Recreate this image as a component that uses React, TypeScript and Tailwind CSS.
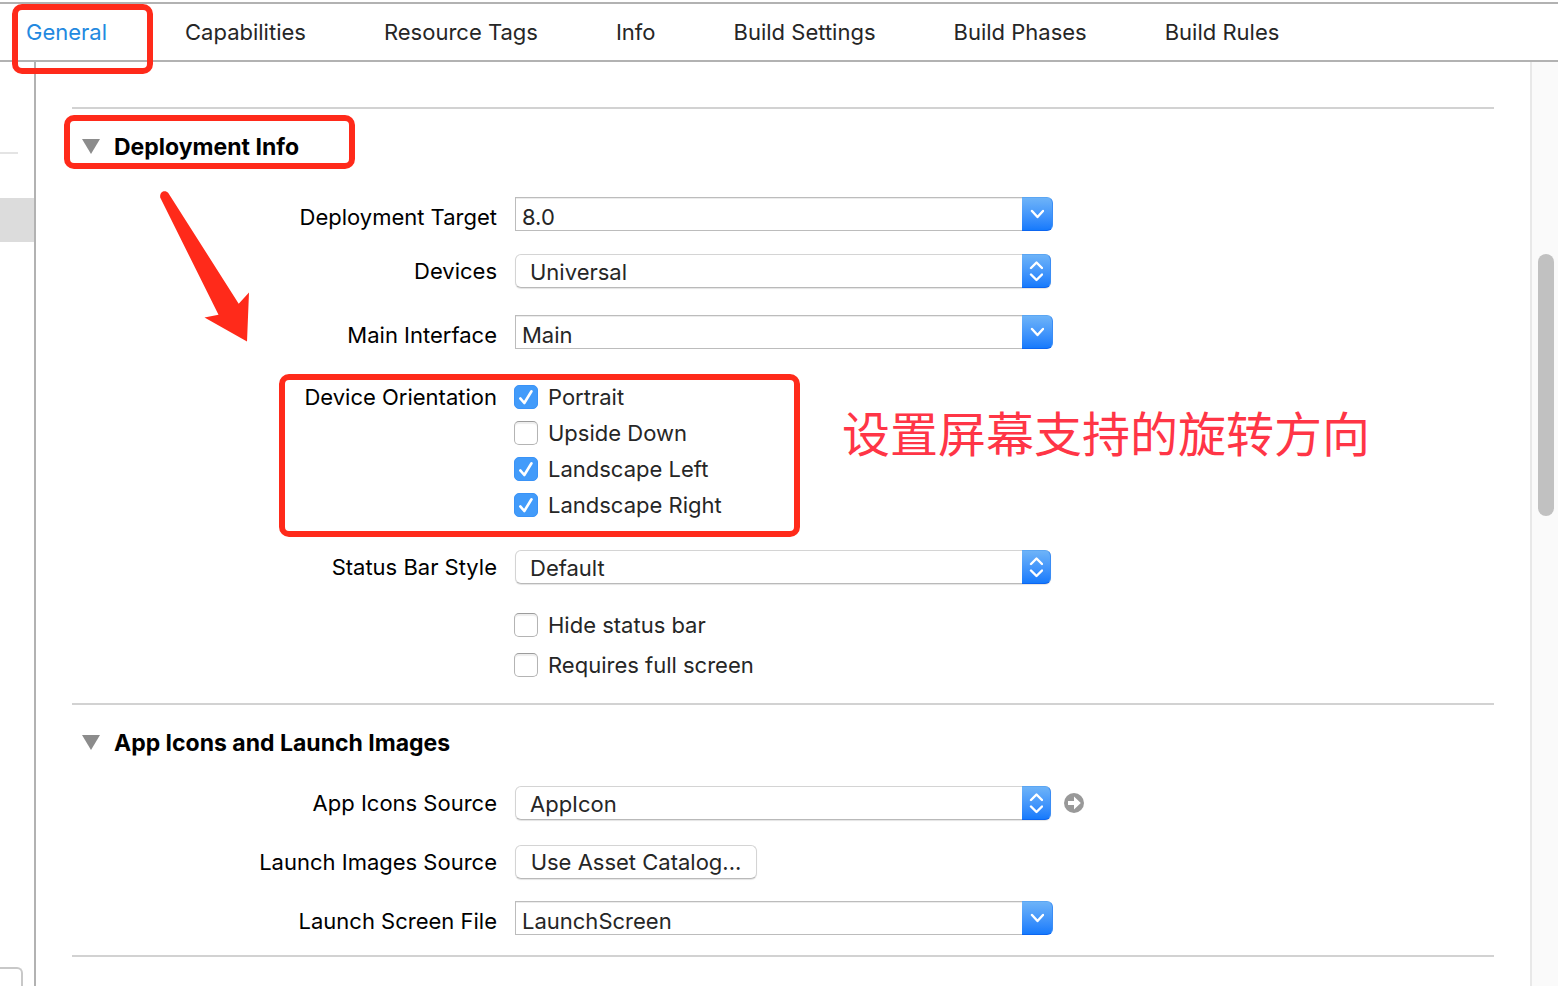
import React from 'react';

const tabs = [
  'General',
  'Capabilities',
  'Resource Tags',
  'Info',
  'Build Settings',
  'Build Phases',
  'Build Rules',
];

function Highlight({ className }: { className: string }) {
  return (
    <span
      aria-hidden="true"
      className={`absolute z-10 rounded-[10px] border-[6px] border-[#ff2a1a] pointer-events-none ${className}`}
    />
  );
}

function Divider({ className }: { className: string }) {
  return <hr className={`border-0 h-[2px] bg-[#d2d2d2] ${className}`} />;
}

function SectionHeading({ title, open, onToggle }: { title: string; open: boolean; onToggle: () => void }) {
  return (
    <h2>
      <button
        type="button"
        aria-expanded={open}
        onClick={onToggle}
        className="flex h-[34px] items-center gap-[14px] pl-[10px] text-[23px] font-bold text-black"
      >
        <svg width="18" height="16" viewBox="0 0 18 16" className={open ? '' : '-rotate-90'}>
          <path d="M0 0H18L9 15Z" fill="#8c8c8c" />
        </svg>
        {title}
      </button>
    </h2>
  );
}

function ComboRow({ id, label, value, className }: { id: string; label: string; value: string; className: string }) {
  return (
    <div className={`flex h-[34px] gap-[18px] ${className}`}>
      <label htmlFor={id} className="w-[425px] shrink-0 pt-[3px] text-right text-black">
        {label}
      </label>
      <div className="flex w-[538px]">
        <input
          id={id}
          type="text"
          defaultValue={value}
          className="min-w-0 flex-1 border border-r-0 border-[#bcbcbc] bg-white pt-[6px] pl-[6px] shadow-[inset_0_1px_0_#ececec] outline-none"
        />
        <button
          type="button"
          aria-label={`Show ${label} options`}
          className="flex w-[31px] items-center justify-center rounded-r-[6px] border border-l-0 border-t-[#5ba6f3] border-r-[#3b8df5] border-b-[#0d66f0] bg-linear-to-b from-[#6db3f8] to-[#157afc]"
        >
          <svg width="14" height="10" viewBox="0 0 14 10" fill="none" stroke="#fff" strokeWidth="2.4" strokeLinecap="round" strokeLinejoin="round">
            <path d="M2 2l5.5 6L13 2" />
          </svg>
        </button>
      </div>
    </div>
  );
}

interface PopupRowProps {
  id: string;
  label: string;
  options: string[];
  className: string;
  children?: React.ReactNode;
}

function PopupRow({ id, label, options, className, children }: PopupRowProps) {
  return (
    <div className={`flex h-[34px] items-center gap-[18px] ${className}`}>
      <label htmlFor={id} className="w-[425px] shrink-0 text-right text-black">
        {label}
      </label>
      <div className="relative h-full w-[536px]">
        <select
          id={id}
          className="h-full w-full appearance-none rounded-[6px] border border-[#d4d4d4] border-b-[#b9b9b9] bg-white pb-[2px] pl-[14px] pr-8 shadow-[0_1px_1px_#e4e4e4] outline-none"
        >
          {options.map((option) => (
            <option key={option}>{option}</option>
          ))}
        </select>
        <span className="absolute inset-y-0 right-0 flex w-[29px] items-center justify-center rounded-r-[6px] border border-l-0 border-t-[#5ba6f3] border-r-[#3b8df5] border-b-[#0d66f0] bg-linear-to-b from-[#6db3f8] to-[#157afc] pointer-events-none">
          <svg width="14" height="22" viewBox="0 0 14 22" fill="none" stroke="#fff" strokeWidth="2.4" strokeLinecap="round" strokeLinejoin="round">
            <path d="M2 8l5.5-5.5L13 8M2 14.5l5.5 5.5L13 14.5" />
          </svg>
        </span>
      </div>
      {children}
    </div>
  );
}

function Checkbox({ label, checked, className }: { label: string; checked?: boolean; className: string }) {
  return (
    <label className={`flex items-center gap-[10px] ${className}`}>
      <span className="relative h-6 w-6">
        <input
          type="checkbox"
          defaultChecked={checked}
          className="peer block h-6 w-6 appearance-none rounded-[5px] border border-[#b4b4b4] border-t-[#9c9c9c] bg-white shadow-[inset_0_2px_1px_#eeeeee] checked:border-[#3a93f7] checked:bg-[#429bfa] checked:shadow-none"
        />
        <svg
          viewBox="0 0 24 24"
          fill="none"
          stroke="#fff"
          strokeWidth="2.6"
          strokeLinecap="round"
          strokeLinejoin="round"
          className="absolute inset-0 hidden h-6 w-6 pointer-events-none peer-checked:block"
        >
          <path d="M6.3 13.4l4 4.6L17.5 6.3" />
        </svg>
      </span>
      {label}
    </label>
  );
}

export default function App() {
  const [activeTab, setActiveTab] = React.useState('General');
  const [deploymentOpen, setDeploymentOpen] = React.useState(true);
  const [iconsOpen, setIconsOpen] = React.useState(true);

  return (
    <div className="flex min-h-screen flex-col bg-white pt-[2px] font-['Inter','Noto_Sans_CJK_SC',sans-serif] text-[22px] leading-[34px] text-[#262626]">
      <nav className="relative flex h-[60px] items-center gap-[78px] border-y-2 border-[#b2b2b2] pl-[26px] whitespace-nowrap">
        {tabs.map((tab) => (
          <button
            key={tab}
            type="button"
            onClick={() => setActiveTab(tab)}
            className={activeTab === tab ? 'text-[#2389e0]' : 'text-[#262626]'}
          >
            {tab}
          </button>
        ))}
        <Highlight className="left-3 top-0 h-[70px] w-[141px]" />
      </nav>

      <div className="flex flex-1">
        <aside className="flex w-9 shrink-0 flex-col border-r-2 border-[#b2b2b2]">
          <div className="mt-[90px] h-[2px] w-[18px] bg-[#e4e4e4]" />
          <div className="mt-11 h-11 bg-[#dcdcdc]" />
          <div className="mt-auto h-[19px] w-[23px] rounded-tr-[6px] border-t-2 border-r-2 border-[#c8c8c8]" />
        </aside>

        <main className="min-w-0 flex-1 px-9">
          <Divider className="mt-[45px]" />

          <section className="relative pt-[21px]">
            <SectionHeading
              title="Deployment Info"
              open={deploymentOpen}
              onToggle={() => setDeploymentOpen(!deploymentOpen)}
            />
            <Highlight className="-left-2 top-[6px] h-[54px] w-[291px]" />
            <svg
              width="90"
              height="152"
              viewBox="160 190 90 152"
              className="absolute left-[88px] top-[81px] pointer-events-none"
            >
              <path
                d="M160.2 197.5C159.5 191 165.5 189.5 168.3 193L238.7 303.7L249 292.5L247 341.5L204.5 317.5L218.5 314.8Z"
                fill="#ff2a1a"
              />
            </svg>

            {deploymentOpen && (
              <div>
                <ComboRow id="target" label="Deployment Target" value="8.0" className="mt-[33px]" />
                <PopupRow id="devices" label="Devices" options={['Universal', 'iPhone', 'iPad']} className="mt-[23px]" />
                <ComboRow id="main-interface" label="Main Interface" value="Main" className="mt-[27px]" />

                <div role="group" aria-labelledby="orientation" className="relative mt-[30px] flex gap-[17px]">
                  <span id="orientation" className="w-[425px] shrink-0 text-right leading-9 text-black">
                    Device Orientation
                  </span>
                  <div>
                    <Checkbox label="Portrait" checked className="h-9" />
                    <Checkbox label="Upside Down" className="h-9" />
                    <Checkbox label="Landscape Left" checked className="h-9" />
                    <Checkbox label="Landscape Right" checked className="h-9" />
                  </div>
                  <Highlight className="left-[207px] -top-[5px] h-[163px] w-[521px]" />
                  <p className="absolute left-[770px] top-6 text-[48px] leading-[64px] whitespace-nowrap text-[#ff3546]">
                    设置屏幕支持的旋转方向
                  </p>
                </div>

                <PopupRow id="status-bar" label="Status Bar Style" options={['Default', 'Light']} className="mt-[27px]" />
                <div className="mt-[21px] flex flex-col items-start pl-[442px]">
                  <Checkbox label="Hide status bar" className="h-10" />
                  <Checkbox label="Requires full screen" className="h-10" />
                </div>
              </div>
            )}
          </section>

          <Divider className="mt-[18px]" />

          <section className="pt-[21px]">
            <SectionHeading
              title="App Icons and Launch Images"
              open={iconsOpen}
              onToggle={() => setIconsOpen(!iconsOpen)}
            />
            {iconsOpen && (
              <div>
                <PopupRow id="app-icons" label="App Icons Source" options={['AppIcon']} className="mt-[26px]">
                  <button type="button" aria-label="Show AppIcon" className="-ml-[5px]">
                    <svg width="20" height="20" viewBox="0 0 20 20">
                      <circle cx="10" cy="10" r="10" fill="#999" />
                      <path d="M4 8h6V3.6L16.8 10 10 16.4V12H4Z" fill="#fff" />
                    </svg>
                  </button>
                </PopupRow>
                <div className="mt-[25px] flex h-[34px] items-center gap-[18px]">
                  <span className="w-[425px] shrink-0 text-right text-black">Launch Images Source</span>
                  <button
                    type="button"
                    className="flex h-full w-[242px] items-center justify-center rounded-[6px] border border-[#d4d4d4] border-b-[#b9b9b9] bg-white whitespace-nowrap shadow-[0_1px_1px_#e4e4e4]"
                  >
                    Use Asset Catalog...
                  </button>
                </div>
                <ComboRow id="launch-screen" label="Launch Screen File" value="LaunchScreen" className="mt-[22px]" />
              </div>
            )}
          </section>

          <Divider className="mt-5" />
        </main>

        <div className="w-7 shrink-0 border-l-2 border-[#e8e8e8] bg-[#fafafa] pt-48 pl-[6px]">
          <div className="h-[262px] w-4 rounded-full bg-[#c1c1c1]" />
        </div>
      </div>
    </div>
  );
}
